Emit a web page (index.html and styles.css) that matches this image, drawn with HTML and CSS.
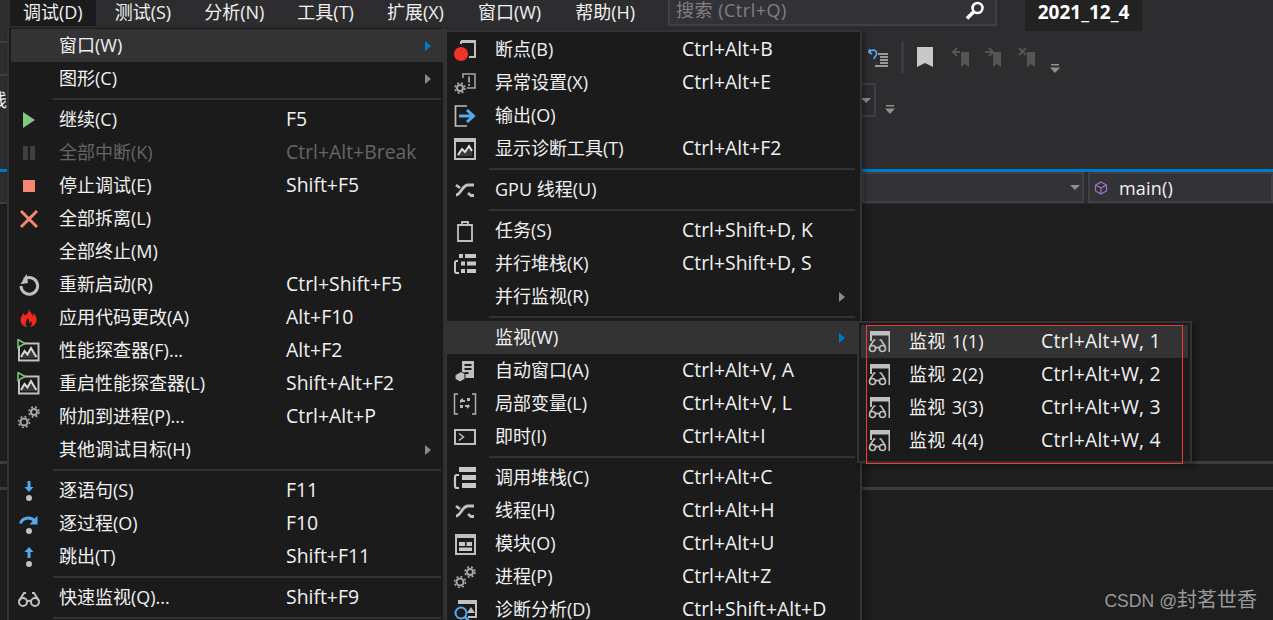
FILE: index.html
```html
<!DOCTYPE html>
<html lang="zh-CN">
<head>
<meta charset="utf-8">
<title>Visual Studio 调试菜单</title>
<link rel="stylesheet" href="styles.css">
</head>
<body>
<svg class="defs" width="0" height="0" aria-hidden="true">
  <defs>
    <symbol id="i-play" viewBox="0 0 24 24"><path d="M6 4l12 8-12 8z" fill="#7fc97f"/></symbol>
    <symbol id="i-pause" viewBox="0 0 24 24"><path d="M6 5h5v14H6zM13 5h5v14h-5z" fill="#404040"/></symbol>
    <symbol id="i-stop" viewBox="0 0 24 24"><path d="M6 6h12v12H6z" fill="#f48771"/></symbol>
    <symbol id="i-x" viewBox="0 0 24 24"><path d="M4 4l16 16M20 4L4 20" stroke="#f48771" stroke-width="3" fill="none"/></symbol>
    <symbol id="i-restart" viewBox="0 0 24 24"><path d="M7 6.500A8.300 8.300 0 1 1 4 13" stroke="#c0c0c0" stroke-width="3" fill="none"/><path d="M10.500 1v9.500H3z" fill="#c0c0c0" transform="rotate(-8 8 7)"/></symbol>
    <symbol id="i-fire" viewBox="0 0 24 24"><path d="M12 3c1 4 3 4 4 7 .6-1 .6-2 .4-3 2.600 2.500 3.600 5 3.100 8-.5 3-3 5.500-6.500 6 2-1.500 2.500-3.500 1-6-.5 1.500-1.500 2-2 2 .5-2-.5-4-1.500-5-.2 2-2.500 3.500-1.500 7 .2.800.6 1.500 1 2-4-.7-6.500-3.500-6.500-7 0-3 2-5 3-7 .5 1.200 1 2 1.500 2.500C10 8.500 12 6 12 3z" fill="#f0281e"/></symbol>
    <symbol id="i-perf" viewBox="0 0 24 24"><path d="M2 4.500h19.500v17H2z" fill="#1b1b1c" stroke="#c0c0c0" stroke-width="2"/><path d="M4 19l3.500-7 3 3.500 3.500-6.500 3.500 6 2 4z" fill="#3a3a3a"/><path d="M4 18l3.500-6 3 3.500 3.500-6.500 3.500 6 2 3" fill="none" stroke="#d8d8d8" stroke-width="2"/><path d="M1 0.500v8l7-4z" fill="#1b1b1c" stroke="#7fc97f" stroke-width="1.500"/></symbol>
    <symbol id="i-gears" viewBox="0 0 24 24"><g fill="none" stroke="#a8a8a8"><circle cx="7" cy="17" r="3.500" stroke-width="2"/><circle cx="7" cy="17" r="5.500" stroke-width="1.500" stroke-dasharray="2 2.300"/><circle cx="17" cy="7" r="3" stroke-width="2"/><circle cx="17" cy="7" r="5" stroke-width="1.500" stroke-dasharray="2 2"/></g></symbol>
    <symbol id="i-into" viewBox="0 0 24 24"><path d="M10.500 2h3v6h3l-4.500 5-4.500-5h3z" fill="#55aaee"/><circle cx="12" cy="19" r="3" fill="#c0c0c0"/></symbol>
    <symbol id="i-over" viewBox="0 0 24 24"><path d="M3.500 11.500C5 5.500 14 4 18 9.500" fill="none" stroke="#55aaee" stroke-width="3"/><path d="M20.500 3.500v9h-8z" fill="#55aaee"/><circle cx="12" cy="19" r="3" fill="#c0c0c0"/></symbol>
    <symbol id="i-out" viewBox="0 0 24 24"><path d="M10.500 13h3V7h3l-4.500-5-4.500 5h3z" fill="#55aaee"/><circle cx="12" cy="19" r="3" fill="#c0c0c0"/></symbol>
    <symbol id="i-glasses" viewBox="0 0 24 24"><g fill="none" stroke="#c0c0c0" stroke-width="2"><circle cx="6" cy="16" r="4"/><circle cx="18" cy="16" r="4"/><path d="M10 15.500c1.300-1 2.700-1 4 0M2 15L7 7h2M22 15L17 7h-2"/></g></symbol>
    <symbol id="i-bp" viewBox="0 0 24 24"><path d="M8 3h14v16h-6M8 3v3" fill="none" stroke="#c0c0c0" stroke-width="2"/><path d="M8 2h15v3H8z" fill="#c0c0c0"/><circle cx="8" cy="16" r="7" fill="#f0342a"/></symbol>
    <symbol id="i-exc" viewBox="0 0 24 24"><path d="M10 7V3h12v14h-8" fill="none" stroke="#a8a8a8" stroke-width="1.500"/><path d="M15.300 5.500h1.500v6h-1.500zM15.300 13h1.500v2h-1.500z" fill="#c0c0c0"/><g fill="none" stroke="#a8a8a8"><circle cx="7" cy="17" r="3" stroke-width="2"/><circle cx="7" cy="17" r="5" stroke-width="1.500" stroke-dasharray="2 2"/></g></symbol>
    <symbol id="i-output" viewBox="0 0 24 24"><path d="M14 2H2.500v20H14" fill="none" stroke="#c0c0c0" stroke-width="1.700"/><path d="M6 12h14M14 6l6.500 6-6.500 6" fill="none" stroke="#55aaee" stroke-width="3"/></symbol>
    <symbol id="i-diag" viewBox="0 0 24 24"><path d="M2 2h20v20H2z" fill="none" stroke="#c0c0c0" stroke-width="2"/><path d="M2 2h20v3H2z" fill="#c0c0c0"/><path d="M19 19H4v-2l5-5 3 3 4-6 3 5z" fill="#3a3a3a"/><path d="M5 18l4-6 3 3 4-6 3 5" fill="none" stroke="#e0e0e0" stroke-width="2"/></symbol>
    <symbol id="i-thread" viewBox="0 0 24 24"><path d="M3 17C8 17 9 7 15 7h6M3 7l4 3M15 15l3 2.500h3" fill="none" stroke="#c0c0c0" stroke-width="2.800"/></symbol>
    <symbol id="i-task" viewBox="0 0 24 24"><path d="M5 6h14v16H5z" fill="none" stroke="#c0c0c0" stroke-width="1.800"/><path d="M9 7V3h6v4" fill="none" stroke="#c0c0c0" stroke-width="1.800"/></symbol>
    <symbol id="i-pstack" viewBox="0 0 24 24"><path d="M6 2h4v4H6zM12 2h11v4H12zM8 9.500h4v4H8zM14 9.500h9v4h-9zM8 17h4v4H8zM14 17h9v4h-9z" fill="#c8c8c8"/><path d="M5 9H3.500C2.500 9 2 10 2 11v8c0 1 .5 2 1.500 2H6" fill="none" stroke="#c8c8c8" stroke-width="2"/></symbol>
    <symbol id="i-plain" viewBox="0 0 24 24"><path d="M9 2h12v17H9z" fill="#c0c0c0"/><path d="M11.500 5h7v2h-7zM11.500 9h7v2h-7zM11.500 13h4v2h-4z" fill="#1b1b1c"/><path d="M2 16l6-3.500 4 2.500v5l-5 3-5-3z" fill="#c0c0c0" stroke="#1b1b1c"/></symbol>
    <symbol id="i-local" viewBox="0 0 24 24"><path d="M5 2H1.500v20H5M19 2h3.500v20H19" fill="none" stroke="#b0b0b0" stroke-width="1.500"/><path d="M7 8l3-2v2h2v2H9l-2 1zM17 14l-3 3v-2h-2v-2h3v-1z" fill="#b8b8b8"/><path d="M14 6h3v3h-3zM7 13h3v3H7z" fill="#b8b8b8"/></symbol>
    <symbol id="i-imm" viewBox="0 0 24 24"><path d="M2 5h20v14H2z" fill="none" stroke="#c0c0c0" stroke-width="2"/><path d="M6 8.500l4.500 3.500L6 15.500" fill="none" stroke="#c0c0c0" stroke-width="1.500"/></symbol>
    <symbol id="i-cstack" viewBox="0 0 24 24"><path d="M6 1h17v5H6zM9 9h14v5H9zM9 17h14v5H9z" fill="#c8c8c8"/><path d="M6 9H4c-1 0-2 1-2 2v9c0 1 1 2 2 2h2" fill="none" stroke="#c8c8c8" stroke-width="2.200"/></symbol>
    <symbol id="i-mod" viewBox="0 0 24 24"><path d="M3 3h19v19H3z" fill="none" stroke="#c0c0c0" stroke-width="2"/><path d="M3 3h19v3H3z" fill="#c0c0c0"/><path d="M6 10h6v4H6zM13.500 10H19v4h-5.500zM6 15.500h13V19H6z" fill="#c8c8c8"/></symbol>
    <symbol id="i-search-diag" viewBox="0 0 24 24"><path d="M5 3h18v16H15" fill="none" stroke="#c0c0c0" stroke-width="2"/><path d="M5 3h18v3H5z" fill="#c0c0c0"/><path d="M14 15l4-6 4 6z" fill="#c0c0c0"/><circle cx="8" cy="15" r="5.500" fill="#1b1b1c" stroke="#55aaee" stroke-width="2"/><path d="M12 19l5 5" stroke="#55aaee" stroke-width="2.500"/></symbol>
    <symbol id="i-watch" viewBox="0 0 24 24"><path d="M3 1h20v21h-1.500V5.500H5V11H3z" fill="#c0c0c0"/><g fill="none" stroke="#c0c0c0" stroke-width="1.600"><circle cx="5.500" cy="18.500" r="3"/><circle cx="15.500" cy="18.500" r="3"/><path d="M8.500 18c1.300-.8 2.700-.8 4 0M2.800 16.500L7 10h1.500M18.200 16.500L14 10h-1.500"/></g></symbol>
    <symbol id="i-bookmark" viewBox="0 0 18 20"><path d="M1 0h16v20l-8-4-8 4z" fill="currentColor"/></symbol>
    <symbol id="i-prev" viewBox="0 0 18 20"><path d="M9 5h8v15l-4-3-4 3z" fill="#555"/><path d="M8 5H2M5 1L1 5l4 4" fill="none" stroke="#555" stroke-width="2"/></symbol>
    <symbol id="i-next" viewBox="0 0 18 20"><path d="M9 5h8v15l-4-3-4 3z" fill="#555"/><path d="M1 5h7M5 1l4 4-4 4" fill="none" stroke="#555" stroke-width="2"/></symbol>
    <symbol id="i-clear" viewBox="0 0 18 20"><path d="M9 5h8v15l-4-3-4 3z" fill="#555"/><path d="M1 1l7 7M8 1L1 8" fill="none" stroke="#555" stroke-width="2"/></symbol>
    <symbol id="i-over-small" viewBox="0 0 10 9"><path d="M1 0h8v1.500H1zM0 3.500h10L5 9z" fill="#909090"/></symbol>
  </defs>
</svg>

<div class="ide">
  <header class="menubar">
    <span class="mb-item mb-active">调试(D)</span>
    <span class="mb-item">测试(S)</span>
    <span class="mb-item">分析(N)</span>
    <span class="mb-item">工具(T)</span>
    <span class="mb-item">扩展(X)</span>
    <span class="mb-item mb-wide">窗口(W)</span>
    <span class="mb-item">帮助(H)</span>
    <div class="searchbox">
      <span class="search-text">搜索 (Ctrl+Q)</span>
      <svg class="search-icon" viewBox="0 0 20 20"><circle cx="12.500" cy="7" r="5" fill="none" stroke="#fff" stroke-width="2.600"/><path d="M8.500 11L2 17.500" stroke="#fff" stroke-width="3.500"/></svg>
    </div>
    <div class="title-badge">2021_12_4</div>
  </header>

  <section class="toolbar">
    <div class="tb-row tb-row-one">
      <svg class="tb-undo" viewBox="0 0 20 20"><path d="M2 1L0.500 4 4 6M1.500 3.500C5 1 9 2 8.500 6 8.300 8 6.500 8.500 6 11" fill="none" stroke="#55aaee" stroke-width="1.600"/><path d="M10 6h10M12 9h8M12 12h8M12 15h8M7 18h13" stroke="#c0c0c0" stroke-width="1.300"/></svg>
      <span class="tb-sep"></span>
      <svg class="tb-mark tb-mark-on"><use href="#i-bookmark"/></svg>
      <svg class="tb-mark tb-mark-prev"><use href="#i-prev"/></svg>
      <svg class="tb-mark"><use href="#i-next"/></svg>
      <svg class="tb-mark tb-mark-clear"><use href="#i-clear"/></svg>
      <svg class="tb-overflow"><use href="#i-over-small"/></svg>
    </div>
    <div class="tb-row tb-row-two">
      <div class="combo"><span class="tri"></span></div>
      <svg class="tb-overflow tb-overflow-two"><use href="#i-over-small"/></svg>
    </div>
  </section>
  <div class="accent"></div>
  <nav class="navbar">
    <div class="nav-box nav-box-left"><span class="tri"></span></div>
    <div class="nav-box nav-box-right">
      <svg class="cube" viewBox="0 0 14 14"><path d="M7 1l5.500 3v6L7 13l-5.500-3V4zM1.500 4L7 7l5.500-3M7 7v6" fill="none" stroke="#a074c4" stroke-width="1.200"/></svg>
      <span class="nav-text">main()</span>
    </div>
  </nav>
  <main class="editor"></main>
  <div class="divider"></div>
  <div class="pane-header"></div>
  <div class="divider"></div>
  <div class="pane"></div>
</div>

<div class="rail">
  <span class="rail-mark rail-mark-a"></span>
  <span class="rail-mark rail-mark-b"></span>
  <span class="rail-glyph">线</span>
  <span class="rail-mark rail-mark-c"></span>
</div>

<div class="menu menu-debug">
  <div class="row row-hover"><span class="ic"></span><span class="lb">窗口(W)</span><span class="sc"></span><span class="arrow arrow-on"></span></div>
  <div class="row"><span class="ic"></span><span class="lb">图形(C)</span><span class="sc"></span><span class="arrow"></span></div>
  <div class="sep"></div>
  <div class="row"><svg class="ic"><use href="#i-play"/></svg><span class="lb">继续(C)</span><span class="sc">F5</span></div>
  <div class="row row-off"><svg class="ic"><use href="#i-pause"/></svg><span class="lb">全部中断(K)</span><span class="sc">Ctrl+Alt+Break</span></div>
  <div class="row"><svg class="ic"><use href="#i-stop"/></svg><span class="lb">停止调试(E)</span><span class="sc">Shift+F5</span></div>
  <div class="row"><svg class="ic"><use href="#i-x"/></svg><span class="lb">全部拆离(L)</span><span class="sc"></span></div>
  <div class="row"><span class="ic"></span><span class="lb">全部终止(M)</span><span class="sc"></span></div>
  <div class="row"><svg class="ic"><use href="#i-restart"/></svg><span class="lb">重新启动(R)</span><span class="sc">Ctrl+Shift+F5</span></div>
  <div class="row"><svg class="ic"><use href="#i-fire"/></svg><span class="lb">应用代码更改(A)</span><span class="sc">Alt+F10</span></div>
  <div class="row"><svg class="ic"><use href="#i-perf"/></svg><span class="lb">性能探查器(F)...</span><span class="sc">Alt+F2</span></div>
  <div class="row"><svg class="ic"><use href="#i-perf"/></svg><span class="lb">重启性能探查器(L)</span><span class="sc">Shift+Alt+F2</span></div>
  <div class="row"><svg class="ic"><use href="#i-gears"/></svg><span class="lb">附加到进程(P)...</span><span class="sc">Ctrl+Alt+P</span></div>
  <div class="row"><span class="ic"></span><span class="lb">其他调试目标(H)</span><span class="sc"></span><span class="arrow"></span></div>
  <div class="sep"></div>
  <div class="row"><svg class="ic"><use href="#i-into"/></svg><span class="lb">逐语句(S)</span><span class="sc">F11</span></div>
  <div class="row"><svg class="ic"><use href="#i-over"/></svg><span class="lb">逐过程(O)</span><span class="sc">F10</span></div>
  <div class="row"><svg class="ic"><use href="#i-out"/></svg><span class="lb">跳出(T)</span><span class="sc">Shift+F11</span></div>
  <div class="sep"></div>
  <div class="row"><svg class="ic"><use href="#i-glasses"/></svg><span class="lb">快速监视(Q)...</span><span class="sc">Shift+F9</span></div>
  <div class="sep"></div>
</div>

<div class="menu menu-window">
  <div class="row"><svg class="ic"><use href="#i-bp"/></svg><span class="lb">断点(B)</span><span class="sc">Ctrl+Alt+B</span></div>
  <div class="row"><svg class="ic"><use href="#i-exc"/></svg><span class="lb">异常设置(X)</span><span class="sc">Ctrl+Alt+E</span></div>
  <div class="row"><svg class="ic"><use href="#i-output"/></svg><span class="lb">输出(O)</span><span class="sc"></span></div>
  <div class="row"><svg class="ic"><use href="#i-diag"/></svg><span class="lb">显示诊断工具(T)</span><span class="sc">Ctrl+Alt+F2</span></div>
  <div class="sep"></div>
  <div class="row"><svg class="ic"><use href="#i-thread"/></svg><span class="lb">GPU 线程(U)</span><span class="sc"></span></div>
  <div class="sep"></div>
  <div class="row"><svg class="ic"><use href="#i-task"/></svg><span class="lb">任务(S)</span><span class="sc">Ctrl+Shift+D, K</span></div>
  <div class="row"><svg class="ic"><use href="#i-pstack"/></svg><span class="lb">并行堆栈(K)</span><span class="sc">Ctrl+Shift+D, S</span></div>
  <div class="row"><span class="ic"></span><span class="lb">并行监视(R)</span><span class="sc"></span><span class="arrow"></span></div>
  <div class="sep"></div>
  <div class="row row-hover"><span class="ic"></span><span class="lb">监视(W)</span><span class="sc"></span><span class="arrow arrow-on"></span></div>
  <div class="row"><svg class="ic"><use href="#i-plain"/></svg><span class="lb">自动窗口(A)</span><span class="sc">Ctrl+Alt+V, A</span></div>
  <div class="row"><svg class="ic"><use href="#i-local"/></svg><span class="lb">局部变量(L)</span><span class="sc">Ctrl+Alt+V, L</span></div>
  <div class="row"><svg class="ic"><use href="#i-imm"/></svg><span class="lb">即时(I)</span><span class="sc">Ctrl+Alt+I</span></div>
  <div class="sep"></div>
  <div class="row"><svg class="ic"><use href="#i-cstack"/></svg><span class="lb">调用堆栈(C)</span><span class="sc">Ctrl+Alt+C</span></div>
  <div class="row"><svg class="ic"><use href="#i-thread"/></svg><span class="lb">线程(H)</span><span class="sc">Ctrl+Alt+H</span></div>
  <div class="row"><svg class="ic"><use href="#i-mod"/></svg><span class="lb">模块(O)</span><span class="sc">Ctrl+Alt+U</span></div>
  <div class="row"><svg class="ic"><use href="#i-gears"/></svg><span class="lb">进程(P)</span><span class="sc">Ctrl+Alt+Z</span></div>
  <div class="row"><svg class="ic"><use href="#i-search-diag"/></svg><span class="lb">诊断分析(D)</span><span class="sc">Ctrl+Shift+Alt+D</span></div>
</div>

<div class="menu menu-watch">
  <div class="row row-hover"><svg class="ic"><use href="#i-watch"/></svg><span class="lb">监视 1(1)</span><span class="sc">Ctrl+Alt+W, 1</span></div>
  <div class="row"><svg class="ic"><use href="#i-watch"/></svg><span class="lb">监视 2(2)</span><span class="sc">Ctrl+Alt+W, 2</span></div>
  <div class="row"><svg class="ic"><use href="#i-watch"/></svg><span class="lb">监视 3(3)</span><span class="sc">Ctrl+Alt+W, 3</span></div>
  <div class="row"><svg class="ic"><use href="#i-watch"/></svg><span class="lb">监视 4(4)</span><span class="sc">Ctrl+Alt+W, 4</span></div>
</div>
<div class="annotation"></div>
<div class="watermark"><span class="wm-latin">CSDN @</span>封茗世香</div>
</body>
</html>
```

FILE: styles.css
```css
* { box-sizing: border-box; }
html, body { margin: 0; padding: 0; height: 620px; overflow: hidden; }
body {
  background: #2d2d30;
  color: #f1f1f1;
  font-family: "Open Sans", "Noto Sans CJK SC", sans-serif;
  font-size: 18px;
  position: relative;
}
.defs { position: absolute; }
.ide { display: flex; flex-direction: column; height: 620px; }

.menubar { display: flex; align-items: flex-start; height: 27px; padding-left: 10px; flex: none; }
.mb-item { height: 26px; line-height: 24px; padding: 0 13px; margin-right: 7px; white-space: nowrap; }
.mb-active { background: #1b1b1c; margin-right: 6px; }
.mb-wide { margin-left: 1px; margin-right: 8px; }
.searchbox {
  width: 329px; height: 26px; margin-left: 13px;
  background: #333337; border: 2px solid #3f3f46; border-top: 0;
  display: flex; align-items: center; justify-content: space-between; padding: 0 8px 0 6px;
  color: #808080;
}
.search-text { letter-spacing: .5px; line-height: 20px; position: relative; top: -2px; }
.search-icon { width: 20px; height: 20px; margin-right: 2px; position: relative; top: -1px; }
.title-badge {
  width: 117px; height: 31px; margin-left: 28px; background: #222;
  color: #fff; font-weight: 700; font-size: 19px; text-align: center; line-height: 25px;
}

.rail { position: absolute; left: 0; top: 0; width: 7px; height: 204px; overflow: hidden; }
.rail-mark { position: absolute; left: 0; width: 7px; height: 2px; background: #3f3f46; }
.rail-mark-a { top: 41px; }
.rail-mark-b { top: 74px; }
.rail-mark-c { top: 202px; }
.rail-glyph { position: absolute; left: -11px; top: 90px; line-height: 20px; }

.toolbar { height: 142px; flex: none; padding-left: 862px; }
.tb-row { display: flex; }
.tb-row-one { height: 56px; padding-top: 15px; align-items: flex-start; }
.tb-undo { width: 20px; height: 20px; margin: 6px 0 0 6px; }
.tb-sep { width: 3px; height: 31px; background: #3c3c40; margin-left: 13px; }
.tb-mark { width: 18px; height: 20px; margin: 5px 0 0 14px; color: #c8c8c8; }
.tb-mark-on { margin-left: 12px; }
.tb-mark-prev { margin-left: 18px; }
.tb-mark-clear { margin-left: 16px; }
.tb-overflow { width: 10px; height: 9px; margin: 22px 0 0 14px; }
.tb-row-two { height: 34px; }
.combo { width: 14px; height: 34px; border: 2px solid #3f3f46; border-left: 0; display: flex; align-items: center; justify-content: flex-end; padding-right: 3px; }
.tri { width: 0; height: 0; border-left: 5px solid transparent; border-right: 5px solid transparent; border-top: 5px solid #909090; }
.tb-overflow-two { margin: 22px 0 0 9px; }

.accent { height: 3px; background: #007acc; flex: none; }
.navbar { height: 32px; display: flex; gap: 4px; padding-left: 862px; flex: none; background: #2d2d30; }
.nav-box { height: 31px; background: #333337; border: 2px solid #3f3f46; display: flex; align-items: center; }
.nav-box-left { width: 222px; justify-content: flex-end; padding-right: 2px; }
.nav-box-right { flex: 1; padding-left: 4px; }
.cube { width: 14px; height: 14px; }
.nav-text { margin-left: 11px; line-height: 26px; letter-spacing: .2px; }

.editor { background: #1e1e1e; height: 257px; flex: none; }
.divider { height: 3px; background: #3d3d3d; flex: none; }
.pane-header { height: 23px; background: #1e1e1e; flex: none; }
.pane { flex: 1; background: #1e1e1e; }

.menu {
  position: absolute;
  background: #1b1b1c;
  border: 2px solid #333337;
  box-shadow: 3px 3px 6px rgba(0, 0, 0, .35);
}
.menu-debug { left: 7px; top: 28px; width: 438px; height: 600px; --label: 227px; padding: 1px 0 0 2px; border-top: 0; }
.menu-window { left: 445px; top: 30px; width: 417px; height: 600px; --label: 187px; padding: 1px 3px 0 0; }
.menu-watch { left: 857px; top: 321px; width: 335px; height: 142px; --label: 132px; padding: 2px; }
.menu-watch .lb { word-spacing: 1.500px; letter-spacing: .2px; }
.menu-watch .sc { letter-spacing: .2px; }

.row { display: flex; align-items: center; height: 33px; white-space: nowrap; padding-right: 12px; }
.row-hover { background: #333334; }
.row-off { color: #656565; }
.ic { width: 24px; height: 24px; margin-left: 6px; margin-right: 18px; flex: none; }
.lb { width: var(--label); flex: none; line-height: 24px; position: relative; top: -1px; }
.sc { flex: 1; line-height: 24px; position: relative; top: -1px; font-size: 19.4px; }
.arrow { width: 0; height: 0; border-left: 6px solid #8a8a8a; border-top: 5px solid transparent; border-bottom: 5px solid transparent; flex: none; }
.arrow-on { border-left-color: #007acc; }
.sep { height: 8px; padding: 3px 2px 3px 42px; }
.sep::before { content: ""; display: block; height: 2px; background: #333337; }

.annotation { position: absolute; left: 866px; top: 325px; width: 317px; height: 139px; border: 1px solid #f03a3a; }
.watermark {
  position: absolute; right: 16px; top: 587px;
  color: #9a9a9a; font-size: 20px; line-height: 26px;
  font-family: "Liberation Sans", "Noto Sans CJK SC", sans-serif;
  white-space: nowrap;
}
.wm-latin { font-size: 17.6px; }
```
